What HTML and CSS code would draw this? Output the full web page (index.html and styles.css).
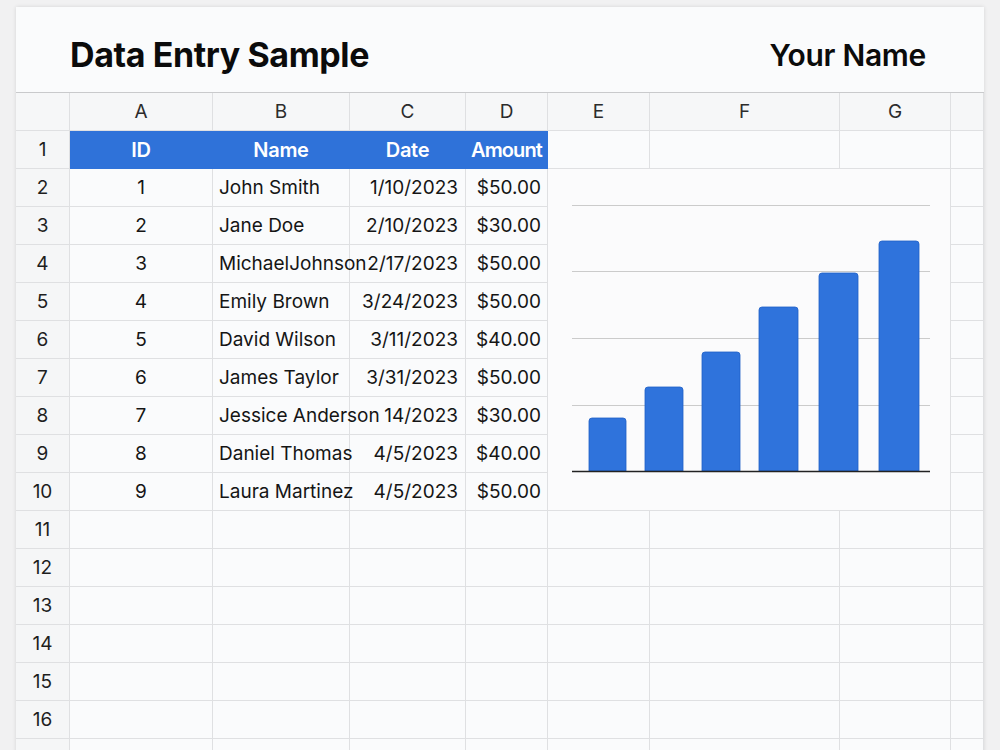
FILE: index.html
```html
<!DOCTYPE html>
<html lang="en">
<head>
    <meta charset="UTF-8">
    <meta name="viewport" content="width=device-width, initial-scale=1.0">
    <title>Data Entry Sample</title>
    <link rel="stylesheet" href="styles.css">
</head>
<body>
    <div class="sheet-card">
        <div class="sheet-header">
            <h1>Data Entry Sample</h1>
            <div class="owner">Your Name</div>
        </div>

        <div class="grid" id="grid">
            <div class="chart">
                <svg width="403" height="342" viewBox="0 0 403 342">
                    <g stroke="#cbcbcb" stroke-width="1">
                        <line x1="24" y1="36.5" x2="382" y2="36.5"/>
                        <line x1="24" y1="102.5" x2="382" y2="102.5"/>
                        <line x1="24" y1="169.5" x2="382" y2="169.5"/>
                        <line x1="24" y1="236.5" x2="382" y2="236.5"/>
                    </g>
                    <g fill="#2f73dc" stroke="#1f5fc6" stroke-width="0.8">
                        <path d="M41 302 V252 Q41 249 44 249 H75 Q78 249 78 252 V302 Z"/>
                        <path d="M97 302 V221 Q97 218 100 218 H132 Q135 218 135 221 V302 Z"/>
                        <path d="M154 302 V186 Q154 183 157 183 H189 Q192 183 192 186 V302 Z"/>
                        <path d="M211 302 V141 Q211 138 214 138 H247 Q250 138 250 141 V302 Z"/>
                        <path d="M271 302 V107 Q271 104 274 104 H307 Q310 104 310 107 V302 Z"/>
                        <path d="M331 302 V75 Q331 72 334 72 H368 Q371 72 371 75 V302 Z"/>
                    </g>
                    <line x1="24" y1="302.5" x2="382" y2="302.5" stroke="#222" stroke-width="1.4"/>
                </svg>
            </div>
        </div>
    </div>

    <script>
        const grid = document.getElementById('grid');
        const letters = ['', 'A', 'B', 'C', 'D', 'E', 'F', 'G', ''];

        const records = [
            { id: 1, name: 'John Smith', date: '1/10/2023', amount: '$50.00' },
            { id: 2, name: 'Jane Doe', date: '2/10/2023', amount: '$30.00' },
            { id: 3, name: 'MichaelJohnson', date: '2/17/2023', amount: '$50.00' },
            { id: 4, name: 'Emily Brown', date: '3/24/2023', amount: '$50.00' },
            { id: 5, name: 'David Wilson', date: '3/11/2023', amount: '$40.00' },
            { id: 6, name: 'James Taylor', date: '3/31/2023', amount: '$50.00' },
            { id: 7, name: 'Jessice Anderson', date: '14/2023', amount: '$30.00' },
            { id: 8, name: 'Daniel Thomas', date: '4/5/2023', amount: '$40.00' },
            { id: 9, name: 'Laura Martinez', date: '4/5/2023', amount: '$50.00' },
        ];

        function addCell(text, cls) {
            const cell = document.createElement('div');
            cell.className = 'cell ' + (cls || '');
            cell.textContent = text;
            grid.appendChild(cell);
        }

        // column letters
        letters.forEach(l => addCell(l, 'col-head'));

        // row 1 - table header
        addCell('1', 'row-num');
        addCell('ID', 'th');
        addCell('Name', 'th');
        addCell('Date', 'th');
        addCell('Amount', 'th th-amount');
        for (let c = 0; c < 4; c++) addCell('', '');

        // rows 2-10 (columns E-G are covered by the chart)
        records.forEach((r, i) => {
            addCell(String(i + 2), 'row-num');
            addCell(r.id, 'center');
            addCell(r.name, 'name');
            addCell(r.date, 'right');
            addCell(r.amount, 'right amount');
            addCell('', '');
        });

        // empty rows (the last one is only partly on screen)
        for (let n = 11; n <= 17; n++) {
            addCell(n <= 16 ? String(n) : '', 'row-num');
            for (let c = 0; c < 8; c++) addCell('', '');
        }
    </script>
</body>
</html>
```

FILE: styles.css
```css
body {
    margin: 0;
    background-color: #f1f1f2;
    font-family: Inter, "Liberation Sans", sans-serif;
    color: #151515;
    overflow: hidden;
}

.sheet-card {
    margin: 7px 16px 0 16px;
    background-color: #fafbfc;
    box-shadow: 0 0 4px rgba(0, 0, 0, 0.12);
}

.sheet-header {
    height: 85px;
    display: flex;
    align-items: center;
    justify-content: space-between;
    padding: 0 58px 0 54px;
    border-bottom: 1px solid #c9cacc;
}

.sheet-header h1 {
    margin: 0;
    font-size: 34px;
    font-weight: 700;
    letter-spacing: -0.4px;
    color: #0b0b0b;
    padding-top: 10px;
}

.owner {
    font-size: 30px;
    font-weight: 600;
    letter-spacing: -0.3px;
    color: #0b0b0b;
    padding-top: 10px;
}

.grid {
    display: grid;
    grid-template-columns: 54px 143px 137px 116px 82px 102px 190px 111px 33px;
    grid-auto-rows: 38px;
}

.cell {
    box-sizing: border-box;
    border-right: 1px solid #dfe0e2;
    border-bottom: 1px solid #dfe0e2;
    font-size: 19px;
    display: flex;
    align-items: center;
    white-space: nowrap;
    overflow: visible;
    min-width: 0;
}

.col-head {
    justify-content: center;
    background-color: #f6f7f8;
    color: #2c2c2c;
}

.row-num {
    justify-content: center;
    background-color: #f5f6f7;
    color: #1e1e1e;
}

.th {
    justify-content: center;
    background-color: #2f72d9;
    color: #fff;
    font-size: 20px;
    font-weight: 600;
    border-right-color: #2f72d9;
    border-bottom-color: #2f72d9;
    letter-spacing: -0.3px;
}

.th-amount {
    letter-spacing: -0.9px;
}

.center {
    justify-content: center;
}

.name {
    padding-left: 6px;
    position: relative;
    z-index: 1;
}

.right {
    justify-content: flex-end;
    padding-right: 7px;
}

.amount {
    padding-right: 6px;
}

.chart {
    grid-column: 6 / 9;
    grid-row: 3 / 12;
    background-color: #fbfbfc;
    border-right: 1px solid #dfe0e2;
    border-bottom: 1px solid #dfe0e2;
    box-sizing: border-box;
}

.chart svg {
    display: block;
}
```
